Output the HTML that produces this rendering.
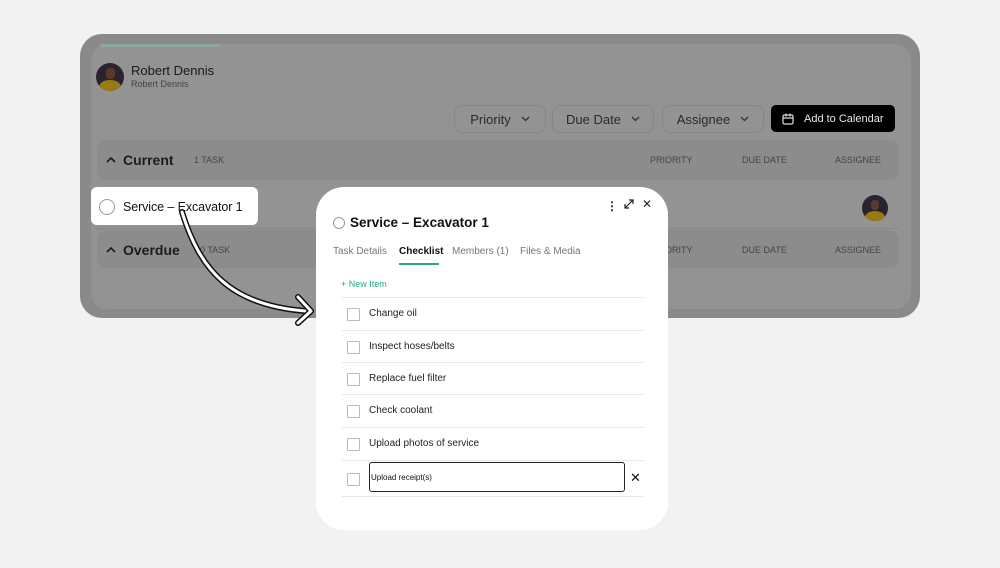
<!DOCTYPE html><html><head><style>
*{margin:0;padding:0;box-sizing:border-box}
body{width:1000px;height:568px;background:#f2f2f2;font-family:"Liberation Sans",sans-serif;position:relative;overflow:hidden}
.a{position:absolute}
.frame{left:80px;top:34px;width:840px;height:284px;background:#8a8a8a;border-radius:22px}
.inner{left:91px;top:44px;width:820px;height:265px;background:#939393;border-radius:16px}
.hdr{background:#8c8c8c;border-radius:10px}
.btn{border:1px solid #868686;border-radius:8px;background:#939393;color:#2a2a2a;font-size:13px;display:flex;align-items:center;justify-content:center;gap:10px;height:28px;top:105px}
.col{font-size:9px;color:#444;top:155px}
.sec{font-size:14px;color:#1c1c1c;font-weight:bold}
.pop{left:316px;top:187px;width:352px;height:343px;background:#fff;border-radius:28px}
.row{left:342px;width:302px;height:33px;border-top:1px solid #e8e8e8;font-size:10px;color:#222}
.row .cb{position:absolute;left:5px;top:10px;width:13px;height:13px;border:1px solid #bbb;border-radius:1px}
.row span{position:absolute;left:27px;top:10px}
</style></head><body>
<div class="a frame"></div>
<div class="a inner"></div>
<div class="a" style="left:100px;top:44px;width:120px;height:3px;background:#8fa89c;border-radius:2px"></div>
<div class="a" style="left:96px;top:63px;width:28px;height:28px;border-radius:50%;background:#2a2430;overflow:hidden"><div style="position:absolute;left:3px;top:17px;width:22px;height:14px;border-radius:50%;background:#9a7a10"></div><div style="position:absolute;left:10px;top:5px;width:9px;height:11px;border-radius:40%;background:#5a3a2a"></div></div>
<div class="a" style="left:131px;top:63px;font-size:13px;color:#1a1a1a">Robert Dennis</div>
<div class="a" style="left:131px;top:79px;font-size:9px;color:#444">Robert Dennis</div>
<div class="a btn" style="left:454px;width:92px">Priority <svg width="9" height="6"><path d="M1 1l3.5 3.5L8 1" fill="none" stroke="#333" stroke-width="1.3"/></svg></div>
<div class="a btn" style="left:552px;width:102px">Due Date <svg width="9" height="6"><path d="M1 1l3.5 3.5L8 1" fill="none" stroke="#333" stroke-width="1.3"/></svg></div>
<div class="a btn" style="left:662px;width:102px">Assignee <svg width="9" height="6"><path d="M1 1l3.5 3.5L8 1" fill="none" stroke="#333" stroke-width="1.3"/></svg></div>
<div class="a" style="left:771px;top:105px;width:124px;height:27px;background:#000;border-radius:5px;color:#e8e8e8;font-size:11px;display:flex;align-items:center;padding-left:11px;gap:10px"><svg width="12" height="12" viewBox="0 0 12 12"><rect x="1" y="2" width="10" height="9" rx="1.5" fill="none" stroke="#ddd" stroke-width="1.2"/><path d="M1 5h10M4 0.5v3M8 0.5v3" stroke="#ddd" stroke-width="1.2"/></svg>Add to Calendar</div>
<div class="a hdr" style="left:97px;top:140px;width:802px;height:40px"></div>
<svg class="a" style="left:106px;top:156px" width="10" height="7"><path d="M1 6l4-4 4 4" fill="none" stroke="#1c1c1c" stroke-width="1.6"/></svg>
<div class="a sec" style="left:123px;top:152px">Current</div>
<div class="a col" style="left:194px">1 TASK</div>
<div class="a col" style="left:650px">PRIORITY</div><div class="a col" style="left:742px">DUE DATE</div><div class="a col" style="left:835px">ASSIGNEE</div>
<div class="a" style="left:97px;top:228px;width:802px;height:1px;background:#888"></div>
<div class="a hdr" style="left:97px;top:230px;width:802px;height:38px"></div>
<svg class="a" style="left:106px;top:246px" width="10" height="7"><path d="M1 6l4-4 4 4" fill="none" stroke="#1c1c1c" stroke-width="1.6"/></svg>
<div class="a sec" style="left:123px;top:242px">Overdue</div>
<div class="a col" style="left:200px;top:245px">0 TASK</div>
<div class="a col" style="left:650px;top:245px">PRIORITY</div><div class="a col" style="left:742px;top:245px">DUE DATE</div><div class="a col" style="left:835px;top:245px">ASSIGNEE</div>
<div class="a" style="left:862px;top:195px;width:26px;height:26px;border-radius:50%;background:#2a2430;overflow:hidden"><div style="position:absolute;left:3px;top:16px;width:20px;height:13px;border-radius:50%;background:#9a7a10"></div><div style="position:absolute;left:9px;top:5px;width:8px;height:10px;border-radius:40%;background:#5a3a2a"></div></div>
<div class="a" style="left:91px;top:187px;width:167px;height:38px;background:#fff;border-radius:6px"></div>
<div class="a" style="left:99px;top:199px;width:16px;height:16px;border:1.5px solid #999;border-radius:50%"></div>
<div class="a" style="left:123px;top:200px;font-size:12.5px;color:#111;letter-spacing:-0.1px">Service – Excavator 1</div>
<svg class="a" style="left:170px;top:200px" width="160" height="130"><path d="M12 12 C30 70,60 105,135 111" fill="none" stroke="#111" stroke-width="6" stroke-linecap="round"/><path d="M12 12 C30 70,60 105,135 111" fill="none" stroke="#fff" stroke-width="3" stroke-linecap="round"/><path d="M128 97 L141 111 L128 123" fill="none" stroke="#111" stroke-width="6" stroke-linejoin="round" stroke-linecap="round"/><path d="M128 97 L141 111 L128 123" fill="none" stroke="#fff" stroke-width="3" stroke-linejoin="round" stroke-linecap="round"/></svg>
<div class="a pop"></div>
<div class="a" style="left:606px;top:199px;font-size:12px;color:#222;font-weight:bold">&#8942;</div>
<svg class="a" style="left:623px;top:198px" width="12" height="12"><path d="M2 10L10 2M6 2h4v4M2 6v4h4" fill="none" stroke="#222" stroke-width="1.2"/></svg>
<div class="a" style="left:642px;top:197px;font-size:12px;color:#222">✕</div>
<div class="a" style="left:333px;top:217px;width:12px;height:12px;border:1px solid #999;border-radius:50%"></div>
<div class="a" style="left:350px;top:215px;font-size:13.5px;font-weight:bold;color:#111">Service – Excavator 1</div>
<div class="a" style="left:333px;top:246px;font-size:10px;color:#777">Task Details</div>
<div class="a" style="left:399px;top:246px;font-size:10px;color:#111;font-weight:bold">Checklist</div>
<div class="a" style="left:399px;top:263px;width:40px;height:2px;background:#2aaa80"></div>
<div class="a" style="left:452px;top:246px;font-size:10px;color:#777">Members (1)</div>
<div class="a" style="left:520px;top:246px;font-size:10px;color:#777">Files &amp; Media</div>
<div class="a" style="left:341px;top:279px;font-size:9px;color:#2aaa80">+ New Item</div>
<div class="a row" style="top:297px"><div class="cb"></div><span>Change oil</span></div>
<div class="a row" style="top:330px"><div class="cb"></div><span>Inspect hoses/belts</span></div>
<div class="a row" style="top:362px"><div class="cb"></div><span>Replace fuel filter</span></div>
<div class="a row" style="top:394px"><div class="cb"></div><span>Check coolant</span></div>
<div class="a row" style="top:427px"><div class="cb"></div><span>Upload photos of service</span></div>
<div class="a row" style="top:460px;height:37px;border-bottom:1px solid #e8e8e8"><div class="cb" style="top:12px"></div></div>
<div class="a" style="left:369px;top:462px;width:256px;height:30px;border:1.5px solid #222;border-radius:3px;font-size:8px;color:#111;padding:10px 0 0 1px">Upload receipt(s)</div>
<div class="a" style="left:630px;top:470px;font-size:13px;color:#111">✕</div>
</body></html>
